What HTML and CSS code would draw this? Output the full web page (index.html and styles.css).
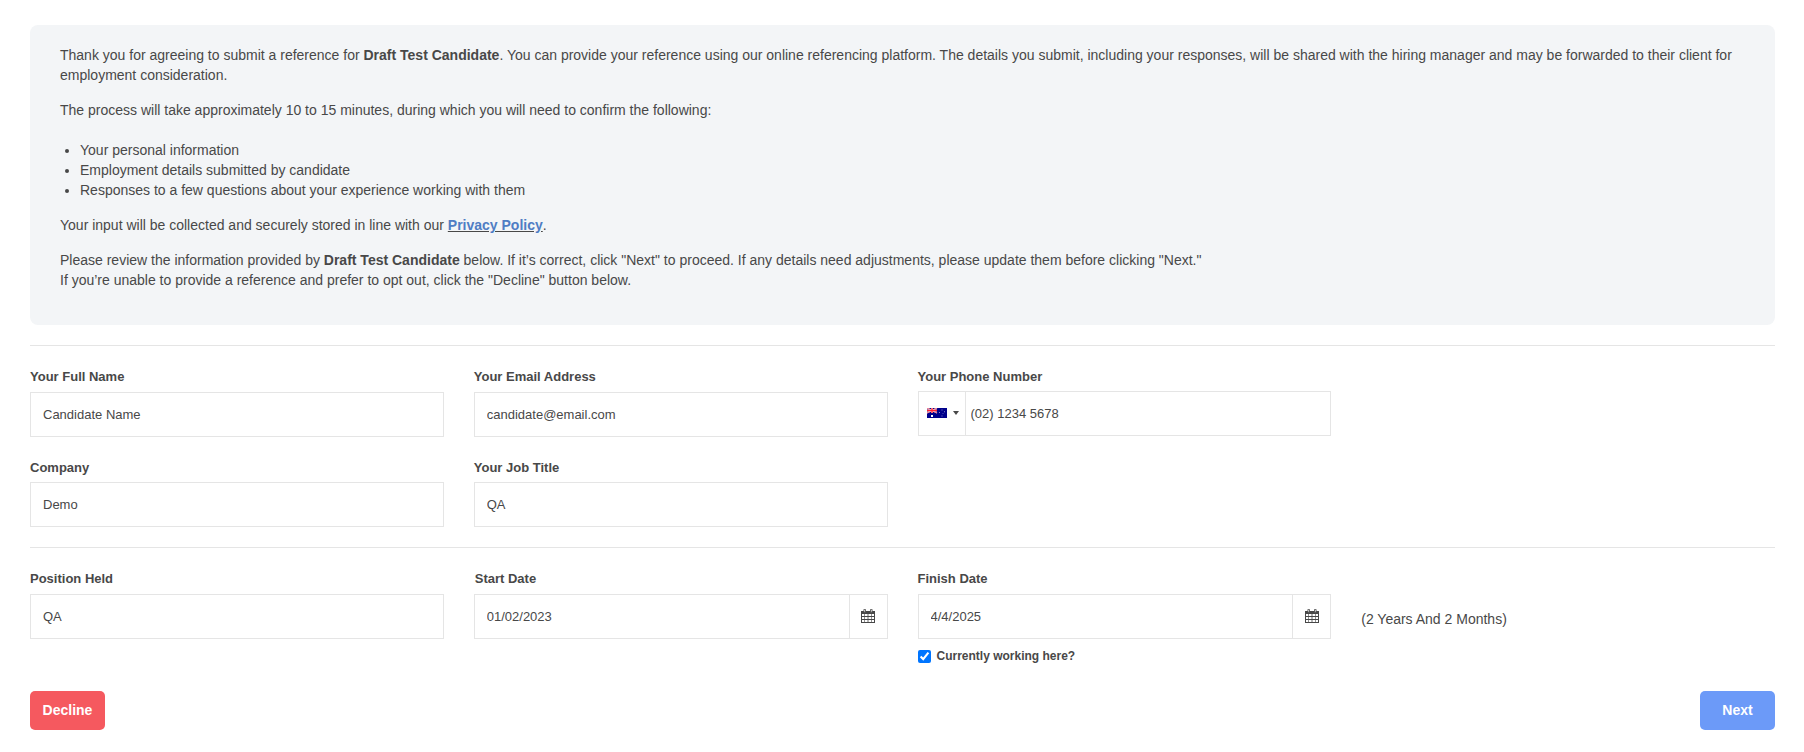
FILE: index.html
```html
<!DOCTYPE html>
<html lang="en">
<head>
<meta charset="utf-8">
<title>Reference Details</title>
<link rel="stylesheet" href="styles.css">
</head>
<body>
<main class="page">
  <section class="intro">
    <p>Thank you for agreeing to submit a reference for <b>Draft Test Candidate</b>. You can provide your reference using our online referencing platform. The details you submit, including your responses, will be shared with the hiring manager and may be forwarded to their client for employment consideration.</p>
    <p>The process will take approximately 10 to 15 minutes, during which you will need to confirm the following:</p>
    <ul>
      <li>Your personal information</li>
      <li>Employment details submitted by candidate</li>
      <li>Responses to a few questions about your experience working with them</li>
    </ul>
    <p>Your input will be collected and securely stored in line with our <u><a class="policy" href="#">Privacy Policy</a></u>.</p>
    <p>Please review the information provided by <b>Draft Test Candidate</b> below. If it’s correct, click "Next" to proceed. If any details need adjustments, please update them before clicking "Next."<br>If you’re unable to provide a reference and prefer to opt out, click the "Decline" button below.</p>
  </section>

  <form class="form">
    <div class="row row-contact">
      <div class="field"><label for="name">Your Full Name</label><input class="control" id="name" type="text" value="Candidate Name"></div>
      <div class="field"><label for="email">Your Email Address</label><input class="control" id="email" type="text" value="candidate@email.com"></div>
      <div class="field field-phone"><label for="phone">Your Phone Number</label>
        <div class="group">
          <div class="country">
            <svg class="flag" width="20" height="10" viewBox="0 0 20 10">
              <rect width="20" height="10" fill="#00008b"/>
              <path d="M0 0l10 5M10 0L0 5" stroke="#fff" stroke-width="1.2"/>
              <path d="M0 0l10 5M10 0L0 5" stroke="#f03048" stroke-width=".7"/>
              <path d="M5 0v5M0 2.5h10" stroke="#fff" stroke-width="1.8"/>
              <path d="M5 0v5M0 2.5h10" stroke="#ff2030" stroke-width="1.3"/>
              <path d="M4 7h2v2H4z" fill="#fff"/>
              <path d="M14.5 1.5h1v1h-1zM12 4h1v1h-1zM17 3.3h1v1h-1zM15.6 5h.8v.8h-.8zM14.5 7.5h1v1h-1z" fill="#8585cf"/>
            </svg>
            <span class="caret"></span>
          </div>
          <input class="control" id="phone" type="text" value="(02) 1234 5678">
        </div>
      </div>
    </div>
    <div class="row row-company">
      <div class="field"><label for="company">Company</label><input class="control" id="company" type="text" value="Demo"></div>
      <div class="field"><label for="job">Your Job Title</label><input class="control" id="job" type="text" value="QA"></div>
    </div>
    <div class="row row-position">
      <div class="field"><label for="position">Position Held</label><input class="control" id="position" type="text" value="QA"></div>
      <div class="field"><label class="label-start" for="start">Start Date</label>
        <div class="group"><input class="control" id="start" type="text" value="01/02/2023"><span class="addon"><svg class="calendar" width="14" height="14" viewBox="0 0 14 14"><path d="M0 2h14v12H0z" fill="#484848"/><path d="M1 5h2.4v2H1zM4 5h2.6v2H4zM7.4 5H10v2H7.4zM10.6 5H13v2h-2.4zM1 8h2.4v2H1zM4 8h2.6v2H4zM7.4 8H10v2H7.4zM10.6 8H13v2h-2.4zM1 11h2.4v2H1zM4 11h2.6v2H4zM7.4 11H10v2H7.4zM10.6 11H13v2h-2.4z" fill="#fff"/><path d="M2.9.4h1.6v2.8H2.9zM9.5.4h1.6v2.8H9.5z" fill="#fff" stroke="#484848" stroke-width=".8"/></svg></span></div>
      </div>
      <div class="field"><label for="finish">Finish Date</label>
        <div class="group"><input class="control" id="finish" type="text" value="4/4/2025"><span class="addon"><svg class="calendar" width="14" height="14" viewBox="0 0 14 14"><path d="M0 2h14v12H0z" fill="#484848"/><path d="M1 5h2.4v2H1zM4 5h2.6v2H4zM7.4 5H10v2H7.4zM10.6 5H13v2h-2.4zM1 8h2.4v2H1zM4 8h2.6v2H4zM7.4 8H10v2H7.4zM10.6 8H13v2h-2.4zM1 11h2.4v2H1zM4 11h2.6v2H4zM7.4 11H10v2H7.4zM10.6 11H13v2h-2.4z" fill="#fff"/><path d="M2.9.4h1.6v2.8H2.9zM9.5.4h1.6v2.8H9.5z" fill="#fff" stroke="#484848" stroke-width=".8"/></svg></span></div>
        <div class="current"><input class="check" id="current" type="checkbox" checked><label for="current">Currently working here?</label></div>
      </div>
      <div class="duration">(2 Years And 2 Months)</div>
    </div>
    <div class="actions">
      <button class="btn btn-decline" type="button">Decline</button>
      <button class="btn btn-next" type="button">Next</button>
    </div>
  </form>
</main>
</body>
</html>
```

FILE: styles.css
```css
* { box-sizing: border-box; }
body {
  margin: 0;
  background: #fff;
  color: #484848;
  font: 14px/20px "Liberation Sans", Arial, sans-serif;
}
.page { padding: 25px 29px 22px 30px; }
.intro {
  height: 300px;
  padding: 20px 30px;
  background: #f3f5f7;
  border-radius: 8px;
}
.intro p { margin: 0 0 15px; }
.intro ul { margin: 20px 0 15px; padding-left: 20px; }
.intro u { text-decoration-color: #484848; }
.policy { color: #4f7dc4; font-weight: bold; text-decoration: none; }
.form { margin-top: 20px; }
.row {
  display: grid;
  grid-template-columns: repeat(4, minmax(0, 1fr));
  column-gap: 30px;
  align-items: start;
}
.row-contact { height: 112px; padding-top: 21px; border-top: 1px solid #e5e5e5; }
.row-company { height: 90px; }
.row-position { height: 144px; padding-top: 21px; border-top: 1px solid #e5e5e5; }
.field > label {
  display: block;
  height: 25px;
  font-size: 13px;
  font-weight: bold;
}
.row-company .field > label { padding-top: 1px; }
.field > .label-start { padding-left: 1px; }
.control {
  display: block;
  width: 100%;
  height: 45px;
  padding: 0 12px;
  border: 1px solid #e5e5e5;
  border-radius: 0;
  background: #fff;
  color: #484848;
  font: 13px "Liberation Sans", Arial, sans-serif;
  outline: none;
}
.group { display: flex; }
.group .control { flex: 1; min-width: 0; }
.country {
  display: flex;
  align-items: center;
  width: 47px;
  padding: 0 0 1px 8px;
  border: 1px solid #e5e5e5;
  border-right: 0;
}
.caret {
  margin-left: 6px;
  border: 3px solid transparent;
  border-top: 4px solid #484848;
  border-bottom: 0;
}
.country + .control { padding-left: 5px; }
.field-phone > label { height: 24px; }
.addon {
  display: flex;
  align-items: center;
  justify-content: center;
  width: 38px;
  padding-bottom: 1px;
  border: 1px solid #e5e5e5;
  border-left: 0;
}
.current {
  display: flex;
  align-items: center;
  gap: 6px;
  height: 20px;
  margin-top: 7px;
  font-size: 12px;
  font-weight: bold;
}
.check { width: 13px; height: 13px; margin: 0; }
.duration { padding-top: 40px; }
.actions { display: flex; justify-content: space-between; }
.btn {
  width: 75px;
  height: 39px;
  padding: 0 0 2px;
  border: 0;
  border-radius: 5px;
  color: #fff;
  font: bold 14px "Liberation Sans", Arial, sans-serif;
}
.btn-decline { background: #f5595f; }
.btn-next { background: #6c9af8; }
```
